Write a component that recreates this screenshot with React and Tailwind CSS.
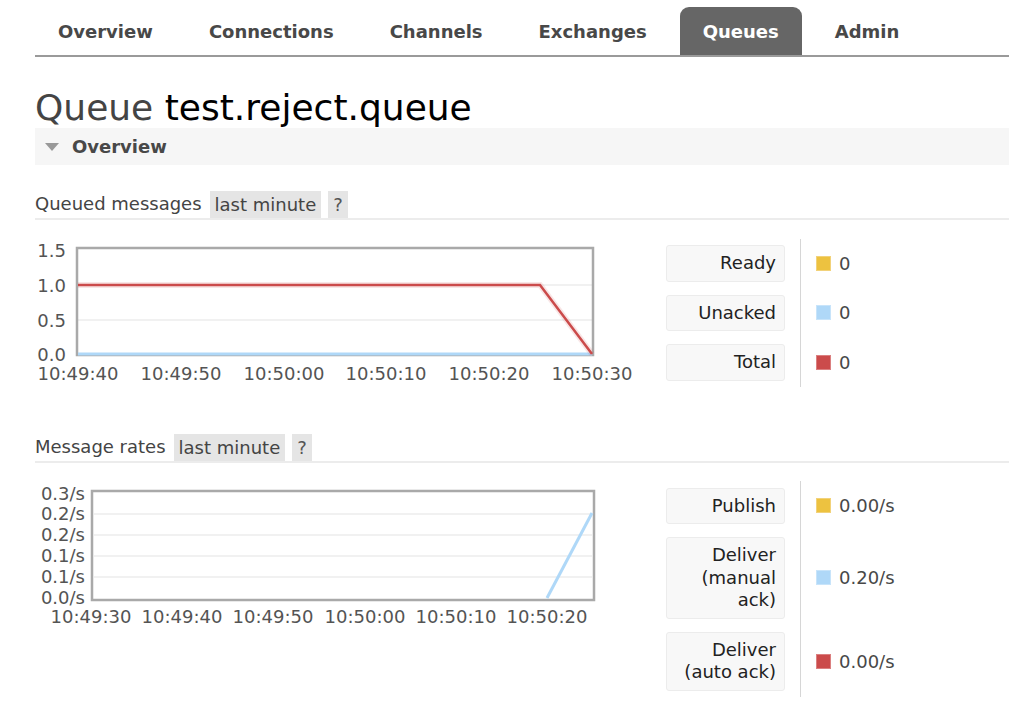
import React from "react";

const FONT = { fontFamily: '"DejaVu Sans", Verdana, sans-serif' };

function Tabs() {
  const tabs = ["Overview", "Connections", "Channels", "Exchanges", "Queues", "Admin"];
  return (
    <div className="flex gap-[10px] pt-[7px] border-b-2 border-[#9a9a9a]">
      {tabs.map((t) => (
        <div
          key={t}
          className={
            t === "Queues"
              ? "h-[48px] px-[23px] flex items-center text-[18px] font-bold text-white bg-[#666] rounded-t-[9px]"
              : "h-[48px] px-[23px] flex items-center text-[18px] font-bold text-[#484848]"
          }
        >
          {t}
        </div>
      ))}
    </div>
  );
}

function SectionHeader({ label, mt }) {
  return (
    <div className={`${mt} flex items-end border-b-2 border-[#ececec]`}>
      <span className="text-[18px] leading-[26px] text-[#444] pb-[1px]">{label}</span>
      <span className="ml-[8px] h-[27px] px-[5px] bg-[#e5e5e5] text-[18px] leading-[27px] text-[#444]">last minute</span>
      <span className="ml-[7px] h-[27px] px-[5px] bg-[#e5e5e5] text-[18px] leading-[27px] text-[#555]">?</span>
    </div>
  );
}

function LegendRow({ label, color, border, value }) {
  return (
    <div className="flex items-stretch">
      <div className="py-[6.5px] pr-[15px] border-r border-[#d6d6d6]">
        <div className="w-[119px] bg-[#f8f8f8] border border-[#ececec] rounded-[3px] px-[8px] py-[6px] text-right text-[18px] leading-[22.5px] text-[#222]">
          {label}
        </div>
      </div>
      <div className="flex items-center pl-[15px]">
        <span className={`w-[15px] h-[15px] border ${color} ${border}`}></span>
        <span className="ml-[8px] text-[18px] text-[#484848]">{value}</span>
      </div>
    </div>
  );
}

function Chart1() {
  const ys = [
    ["1.5", 12],
    ["1.0", 47],
    ["0.5", 82],
    ["0.0", 116],
  ];
  const xs = ["10:49:40", "10:49:50", "10:50:00", "10:50:10", "10:50:20", "10:50:30"];
  const xc = [43, 146, 249, 351, 454, 557];
  return (
    <svg width="631" height="148" className="block shrink-0" style={FONT}>
      <line x1="43" y1="47" x2="557" y2="47" stroke="#ececec" strokeWidth="1.5" />
      <line x1="43" y1="82" x2="557" y2="82" stroke="#ececec" strokeWidth="1.5" />
      <rect x="42" y="10" width="516" height="107" fill="none" stroke="#a9a9a9" strokeWidth="2.5" />
      <line x1="43" y1="116" x2="557" y2="116" stroke="#afd8f8" strokeWidth="3" />
      <polyline points="43,47 505,47 557,116" fill="none" stroke="rgba(203,75,75,0.14)" strokeWidth="6" />
      <polyline points="43,47 505,47 557,116" fill="none" stroke="#cb4b4b" strokeWidth="2.5" />
      {ys.map(([t, y]) => (
        <text key={t} x="31" y={y + 6.5} textAnchor="end" fontSize="18" fill="#545454">
          {t}
        </text>
      ))}
      {xs.map((t, i) => (
        <text key={t} x={xc[i]} y="141.5" textAnchor="middle" fontSize="18" fill="#545454">
          {t}
        </text>
      ))}
    </svg>
  );
}

function Chart2() {
  const ys = [
    ["0.3/s", 13],
    ["0.2/s", 33],
    ["0.2/s", 54],
    ["0.1/s", 75],
    ["0.1/s", 96],
    ["0.0/s", 117],
  ];
  const xs = ["10:49:30", "10:49:40", "10:49:50", "10:50:00", "10:50:10", "10:50:20"];
  const xc = [56, 147, 238, 330, 421, 512];
  return (
    <svg width="631" height="148" className="block shrink-0" style={FONT}>
      {[33, 54, 75, 96].map((y) => (
        <line key={y} x1="59" y1={y} x2="557" y2={y} stroke="#ececec" strokeWidth="1.5" />
      ))}
      <rect x="57" y="10" width="502" height="109" fill="none" stroke="#a9a9a9" strokeWidth="2.5" />
      <polyline points="512,117 557,32" fill="none" stroke="#afd8f8" strokeWidth="3" />
      {ys.map(([t, y], i) => (
        <text key={i} x="50" y={y + 6} textAnchor="end" fontSize="18" fill="#545454">
          {t}
        </text>
      ))}
      {xs.map((t, i) => (
        <text key={t} x={xc[i]} y="142" textAnchor="middle" fontSize="18" fill="#545454">
          {t}
        </text>
      ))}
    </svg>
  );
}

export default function App() {
  return (
    <div className="w-[1009px] h-[701px] bg-white overflow-hidden pl-[35px]" style={FONT}>
      <Tabs />
      <h1 className="mt-[31px] text-[36px] leading-[40px] text-[#444] font-normal">
        Queue <span className="text-black">test.reject.queue</span>
      </h1>
      <div className="h-[37px] bg-[#f6f6f6] flex items-center pl-[10px]">
        <svg width="14" height="8" viewBox="0 0 14 8" className="block">
          <polygon points="0,0 14,0 7,8" fill="#999" />
        </svg>
        <span className="ml-[13px] text-[18px] font-bold text-[#484848]">Overview</span>
      </div>

      <SectionHeader label="Queued messages" mt="mt-[26px]" />
      <div className="mt-[18px] flex items-start">
        <Chart1 />
        <div className="py-[0.5px]">
          <LegendRow label="Ready" color="bg-[#edc240]" border="border-[#f2d27a]" value="0" />
          <LegendRow label="Unacked" color="bg-[#afd8f8]" border="border-[#c8e4fa]" value="0" />
          <LegendRow label="Total" color="bg-[#cb4b4b]" border="border-[#db8080]" value="0" />
        </div>
      </div>

      <SectionHeader label="Message rates" mt="mt-[46px]" />
      <div className="mt-[18px] flex items-start">
        <Chart2 />
        <div className="py-[0.5px]">
          <LegendRow label="Publish" color="bg-[#edc240]" border="border-[#f2d27a]" value="0.00/s" />
          <LegendRow label="Deliver (manual ack)" color="bg-[#afd8f8]" border="border-[#c8e4fa]" value="0.20/s" />
          <LegendRow label="Deliver (auto ack)" color="bg-[#cb4b4b]" border="border-[#db8080]" value="0.00/s" />
        </div>
      </div>
    </div>
  );
}
